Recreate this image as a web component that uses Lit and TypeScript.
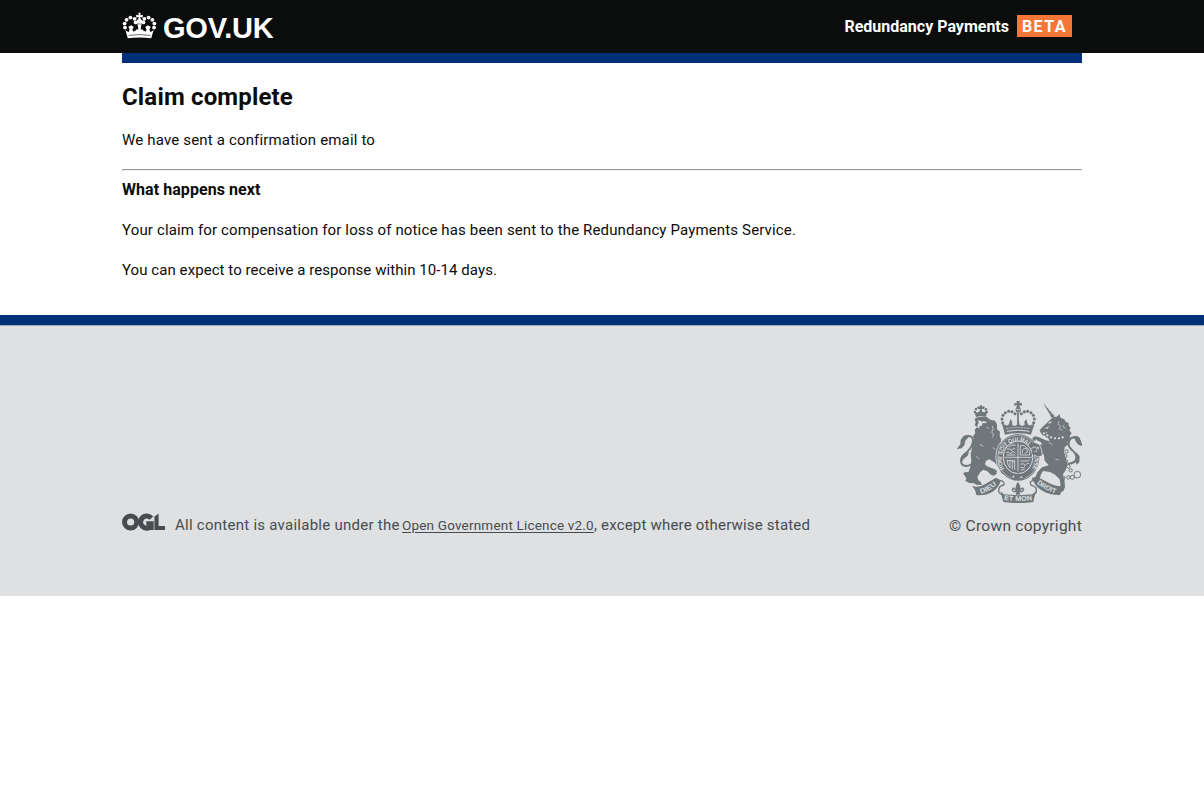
import { LitElement, html, svg, css } from "lit";
import { customElement } from "lit/decorators.js";

@customElement("crown-logo")
class CrownLogo extends LitElement {
  static styles = css`:host { display: block; width: 35px; height: 27px; } svg { display: block; }`;
  render() {
    const pearls = [[2.6, 11.6], [3, 15.6], [4.6, 7.8], [8.4, 5.6], [12.6, 6.8], [13.6, 10.4]];
    return html`<svg width="35" height="27" viewBox="0 0 35 27" fill="#fff">
      ${pearls.map(([x, y]) => svg`<circle cx=${x} cy=${y} r="1.9"></circle><circle cx=${35 - x} cy=${y} r="1.9"></circle>`)}
      <path d="M16.3.8h2.4l-.5 2.4 2.6-.5v2.7l-2.5-.4.5 2.4c1.2.3 1.9 1.1 1.9 2.2 0 1-.6 1.8-1.5 2.2h-3.4c-.9-.4-1.5-1.2-1.5-2.2 0-1.1.7-1.9 1.9-2.2l.5-2.4-2.5.4V2.7l2.6.5z"/>
      <path d="M3.4 18l3.2 2.2 1-3-1.3-2.4 3-1.5 2.4 1.8-1.2 2.2.6 2.2 2.2-.6 1.3-1.7 1.7.6L16 14.6l-.8-2.4h4.6l-.8 2.4-.3 3.2 1.7-.6 1.3 1.7 2.2.6.6-2.2-1.2-2.2 2.4-1.8 3 1.5-1.3 2.4 1 3 3.2-2.2-2.4 8.2q-11.7-1.6-23.4 0z"/>
      <path d="M6.6 23.4q10.9-1.7 21.8 0" stroke="#0b0c0c" stroke-width=".6" fill="none"/>
    </svg>`;
  }
}

@customElement("ogl-logo")
class OglLogo extends LitElement {
  static styles = css`:host { display: block; width: 43px; height: 18px; } svg { display: block; }`;
  render() {
    return html`<svg width="43" height="18" viewBox="0 0 43 18">
      <circle cx="8.6" cy="9" r="6.1" fill="none" stroke="#484c50" stroke-width="5"/>
      <path d="M29.4 5.2A6.1 6.1 0 1 0 29 13.4" fill="none" stroke="#484c50" stroke-width="5"/>
      <path d="M24.3 8.3h7.4v8.7h-3.8v-4.3h-3.6zM32.4 3.5l4.2-2.7v12.1H43V17H32.4z" fill="#484c50"/>
    </svg>`;
  }
}

@customElement("royal-arms")
class RoyalArms extends LitElement {
  static styles = css`
    :host { display: block; width: 125px; height: 102px; }
    svg { display: block; font-family: "Liberation Sans", sans-serif; font-weight: 700; }
    .ink { fill: #6f777b; }
    .line { fill: none; stroke: #6f777b; }
    .cut { fill: none; stroke: #dee0e2; }
    .paper { fill: #dee0e2; }
  `;
  render() {
    const arch = [[151, 84], [146, 74], [144, 63], [147, 52], [154, 44], [164, 40], [174, 41], [183, 47]];
    const crest = [[63, 42], [66, 33], [74, 29], [88, 29], [96, 34], [98, 42]];
    const links = [[317, 227, 6], [327, 240, 6], [343, 238, 5], [355, 238, 6], [370, 230, 10], [350, 217, 5], [338, 160, 5], [334, 174, 5], [336, 190, 5], [343, 205, 5]];
    const collar = [[270, 106], [280, 112], [291, 118], [303, 121], [315, 121], [326, 118]];
    return html`<svg width="125" height="102" viewBox="9 9 375 306">
      <defs>
        <path id="garter" d="M151 213A49 54 0 1 1 233 213"/>
        <path id="left-motto" d="M80 287Q106 282 131 257"/>
        <path id="mid-motto" d="M150 306Q192 312 236 306"/>
        <path id="right-motto" d="M248 256Q274 278 306 287"/>
      </defs>

      ${crest.map(([x, y]) => svg`<circle class="ink" cx=${x} cy=${y} r="4"></circle>`)}
      <path class="ink" d="M78 22h6v6h4v5h-5l1 8 6 2 9-4-3 18q-15-6-30 1l-5-18 9 4 7-4 1-7h-5v-5h5z"/>
      <path class="ink" d="M62 62Q79 53 98 57L109 65 123 68 129 79 129 94 138 101 137 115 142 125 138 137 142 149 136 163 144 175 151 195 164 219 160 227 147 229 138 220 131 205 121 193 106 184 96 188 93 199 99 205 111 209 121 213 129 219 127 229 118 233 109 229 100 220 88 215 79 222 70 237 73 247 80 252 84 260 69 261 59 256 46 255 34 249 37 241 31 232 27 225 36 222 43 223 49 207 52 188 50 168 54 150 53 136 60 124 57 115 64 105 62 95 70 87 62 82 65 74Z"/>
      <path class="paper" d="M72 67l8 1 4 4 5-3 11 4-7 3-7-1-3 9-5-1-3 4 3 4-7-2-1-7 4-6z"/>
      <path class="cut" stroke-width="2.2" d="M98 88l7 3M115 84l3 9-5 9 6 8-4 8M78 139l10 6M67 175l9 8M116 148l8 7"/>
      <path class="line" stroke-width="6" d="M52 199C20 216 12 184 32 168c27-21 34-52 13-54-12-1-19 9-20 20"/>
      <path class="ink" d="M44 110l-15 3-9 13-1 13-11 14 15-2 8-9 3-14 10-11zM29 169l16-8-4 12-13 11-5 10-3-13z"/>

      ${arch.map(([x, y]) => svg`<circle class="ink" cx=${x} cy=${y} r="4.6"></circle><circle class="ink" cx=${385 - x} cy=${y} r="4.6"></circle>`)}
      <circle class="ink" cx="192.5" cy="36" r="8"/>
      <path class="ink" d="M187 9h11l-2 7 8-1v8l-8-1 3 10h-13l3-10-8 1v-8l8 1z"/>
      <path class="cut" stroke-width="2" d="M185 34h15M192 37v7"/>
      <path class="line" stroke-width="5" d="M192 43v34"/>
      <path class="ink" d="M144 77l14 6 7-4 4-16 6 8-1 10 9 3 6-4 4-16 4 16 6 4 9-3-1-10 6-8 4 16 7 4 13-6-10 33q-39-8-78 0z"/>
      <path class="cut" stroke-width="3" d="M159 100q34-7 67 0"/>
      <path class="cut" stroke-width="2" stroke-dasharray="6 3" d="M157 92q36-7 71 0"/>

      <ellipse class="ink" cx="192" cy="178" rx="64" ry="70"/>
      <ellipse class="cut" cx="192" cy="178" rx="60.5" ry="66.5" stroke-width="1.5"/>
      <ellipse class="cut" cx="192" cy="178" rx="44.5" ry="49" stroke-width="3"/>
      <text class="paper" font-size="18"><textPath href="#garter" textLength="222" lengthAdjust="spacingAndGlyphs">HONI SOIT QUI MAL Y PENSE</textPath></text>
      <path class="cut" stroke-width="2.5" d="M192 136v84M151 178h83"/>
      <path class="cut" stroke-width="2.6" d="M164 146q8-6 21-5M159 153h9l4 5 6-8 6 4M156 163h9l5 5 6-8 8 5M158 171h26M199 189h21l7-4M199 198h10l5 4 7-7 5 2M199 209h9l5-5M201 217l11-4"/>
      <path class="cut" stroke-width="2.4" d="M199 142l11 1q12 6 17 17v11h-28zM205 166q-3-16 12-15l4 10-9 6M160 185q-1 15 8 24M168 185v25M175 185v29M182 185v31M158 188q16-3 25 4"/>
      <path class="ink" d="M170 238l22-12 22 12-8 9h-28z"/>
      <circle class="paper" cx="178" cy="236" r="3"/><circle class="paper" cx="202" cy="238" r="3"/>

      <path class="ink" d="M267 14l35 41-8 6z"/>
      <path class="cut" stroke-width="1.5" d="M277 31l4-4M284 40l5-5M291 49l5-5"/>
      <path class="ink" d="M291 63l9-6 9-1 8-8 2 11 12 5 4 7 9 4v8l6 7-4 7 7 9-6 9 3 10-10 6 3 8-11 9-2 13 5 18 5 19-4 17-10 15 5 14 2 22-5 14-18 3-5-5 10-8 5-9-3-17-14-14-15-8-21-3-6 10-4 14-13 7-9-2-1-8 10-3 7-16 13-13 20-6-12-14-3-21-6 6-13 2-9-6-8-1 2-8 13 1 8-12-12-5-13 5-7-5 5-8 13-2 12 5 11 1-5-8-12-5-11 1-2-7 7-6 13 3 20 9 12 2-6-12-2-15-13 5-6-3-3-8 8-8z"/>
      <path class="paper" d="M284 73l9-3-2 5-7 2zM271 91l15-6-6 7z"/>
      <path class="cut" stroke-width="1.8" d="M315 70l-3 9 8 5-4 9 10 4M330 80l-3 7 9 4M284 133l12 7M304 183l12 4"/>
      ${collar.map(([x, y]) => svg`<circle class="ink" cx=${x} cy=${y} r="7"></circle><circle class="paper" cx=${x} cy=${y} r="3.4"></circle>`)}
      <circle class="line" cx="270" cy="159" r="6" stroke-width="3"/>
      <path class="cut" stroke-width="2.5" d="M245 124A67 73 0 0 1 251 221M139 221A67 73 0 0 1 137 136"/>
      <path class="line" stroke-width="6" d="M341 198c37-4 30-29 12-43-17-15-8-37 9-37 10 0 17 8 17 18"/>
      <path class="ink" d="M352 119l14-6 10 5 5 14 8 13-15-4-8-9-4-10zM366 163l11 12-1 17-8 8-4-10z"/>
      ${links.map(([x, y, r]) => svg`<circle class="line" cx=${x} cy=${y} r=${r} stroke-width="3"></circle>`)}

      <path class="ink" d="M54 264q22 7 44-8l28-17 14 8q-2 19-24 34-22 13-49 10-2-16-13-27z"/>
      <path class="ink" d="M334 264q-21 4-43-6l-36-19-17 8q4 19 27 31 25 14 53 13 4-16 16-27z"/>
      <path class="line" stroke-width="4" d="M136 247q18 2 13 14-16 3-15 18 1 9 13 12M241 247q-18 2-9 15 17 3 15 18-1 8-11 11"/>
      <path class="ink" d="M139 280l10 9q45 5 87 0l9-9-7 32q-45 7-90 0z"/>
      <text class="paper" font-size="21"><textPath href="#left-motto" textLength="56" lengthAdjust="spacingAndGlyphs">DIEU</textPath></text>
      <text class="paper" font-size="21"><textPath href="#mid-motto" textLength="85" lengthAdjust="spacingAndGlyphs">ET MON</textPath></text>
      <text class="paper" font-size="21"><textPath href="#right-motto" textLength="64" lengthAdjust="spacingAndGlyphs">DROIT</textPath></text>
      <path class="line" stroke-width="4" d="M188 281q-5-12-11-10-5 6 3 9M196 281q5-12 11-10 5 6-3 9M178 281h28"/>
      <path class="ink" d="M192 252q12 12 4 27l3 11h-14l3-11q-8-15 4-27z"/>
    </svg>`;
  }
}

@customElement("app-root")
class AppRoot extends LitElement {
  static styles = css`
    :host { display: block; min-height: 811px; background: #fff; color: #0b0c0c; font: 15px/20px Roboto, sans-serif; letter-spacing: .145px; }
    .header { height: 53px; background: #0b0c0c; color: #fff; }
    .wrap { width: 960px; margin: 0 auto; }
    .bar { display: flex; align-items: flex-start; }
    .crown { margin-top: 12px; }
    .brand { margin: 10px 0 0 6px; font: 700 29px/36px "Liberation Sans", sans-serif; letter-spacing: -.2px; white-space: nowrap; }
    .service { margin: 17px 8px 0 auto; font-size: 16px; font-weight: 700; letter-spacing: 0; white-space: nowrap; }
    .beta { box-sizing: border-box; width: 55px; height: 22px; margin: 15px 10px 0 0; padding-left: 5px; background: #f47738; font-size: 16px; font-weight: 700; line-height: 24px; letter-spacing: 1.4px; white-space: nowrap; }
    .main { box-sizing: border-box; height: 262px; border-top: 10px solid #003078; padding-top: 19px; }
    h1 { margin: 0; font-size: 24px; line-height: 30px; letter-spacing: .16px; }
    p { margin: 0; white-space: nowrap; }
    .sent { margin-top: 18px; letter-spacing: .167px; }
    hr { height: 0; margin: 19px 0 9px; border: 1px solid; border-color: #9a9a9a #eee #eee #9a9a9a; }
    h2 { margin: 0 0 20px; font-size: 16px; line-height: 20px; letter-spacing: .06px; }
    .gap { margin-top: 20px; letter-spacing: .065px; }
    .footer { box-sizing: border-box; height: 281px; border-top: 10px solid #003078; background: #dee0e2; color: #484c50; }
    .rule { height: 75px; border-top: 1px solid #a1acb2; }
    .meta { display: flex; align-items: flex-end; height: 135px; }
    .ogl { margin: 0 10px 5px 0; }
    .licence { display: flex; align-items: baseline; padding-bottom: 1px; }
    .lead { width: 227px; letter-spacing: .26px; }
    .link { width: 192px; text-decoration: underline; text-underline-offset: 2px; font-size: 13.5px; letter-spacing: .19px; }
    .tail { letter-spacing: .19px; }
    .copy { margin-left: auto; display: flex; flex-direction: column; align-items: flex-end; gap: 13px; }
    .rights { font-size: 15.5px; letter-spacing: .27px; }
  `;
  render() {
    return html`
      <header class="header"><div class="wrap bar">
        <crown-logo class="crown"></crown-logo><span class="brand">GOV.UK</span>
        <span class="service">Redundancy Payments</span><span class="beta">BETA</span>
      </div></header>
      <main class="wrap main">
        <h1>Claim complete</h1>
        <p class="sent">We have sent a confirmation email to</p>
        <hr />
        <h2>What happens next</h2>
        <p>Your claim for compensation for loss of notice has been sent to the Redundancy Payments Service.</p>
        <p class="gap">You can expect to receive a response within 10-14 days.</p>
      </main>
      <footer class="footer"><div class="rule"></div>
        <div class="wrap meta"><ogl-logo class="ogl"></ogl-logo>
          <p class="licence"><span class="lead">All content is available under the</span><span class="link">Open Government Licence v2.0</span><span class="tail">, except where otherwise stated</span></p>
          <div class="copy"><royal-arms></royal-arms><p class="rights">© Crown copyright</p></div>
        </div>
      </footer>`;
  }
}
